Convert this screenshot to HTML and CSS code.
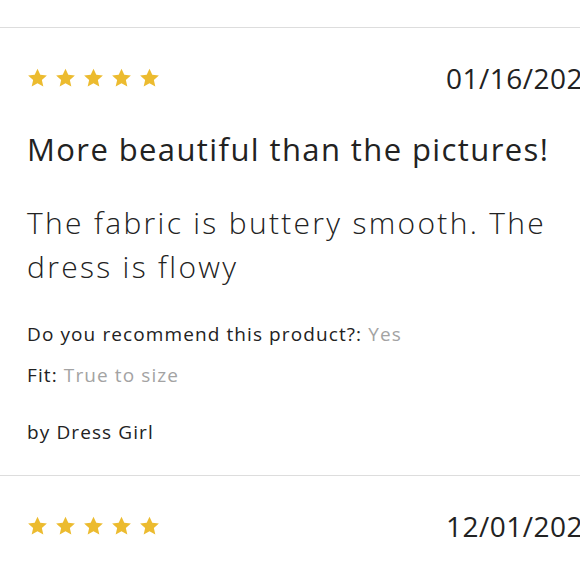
FILE: index.html
```html
<!DOCTYPE html>
<html lang="en">
<head>
<meta charset="utf-8">
<title>Reviews</title>
<link rel="stylesheet" href="styles.css">
</head>
<body>
<div class="page">
  <article class="review">
    <div class="review-head">
      <div class="stars" aria-label="5 stars">
        <svg class="star" viewBox="0 0 24 23"><path d="M12 0.8l3.2 7.1 7.6.7-5.8 5.1 1.7 7.6L12 17.4l-6.7 3.9 1.7-7.6-5.8-5.1 7.6-.7z"/></svg>
        <svg class="star" viewBox="0 0 24 23"><path d="M12 0.8l3.2 7.1 7.6.7-5.8 5.1 1.7 7.6L12 17.4l-6.7 3.9 1.7-7.6-5.8-5.1 7.6-.7z"/></svg>
        <svg class="star" viewBox="0 0 24 23"><path d="M12 0.8l3.2 7.1 7.6.7-5.8 5.1 1.7 7.6L12 17.4l-6.7 3.9 1.7-7.6-5.8-5.1 7.6-.7z"/></svg>
        <svg class="star" viewBox="0 0 24 23"><path d="M12 0.8l3.2 7.1 7.6.7-5.8 5.1 1.7 7.6L12 17.4l-6.7 3.9 1.7-7.6-5.8-5.1 7.6-.7z"/></svg>
        <svg class="star" viewBox="0 0 24 23"><path d="M12 0.8l3.2 7.1 7.6.7-5.8 5.1 1.7 7.6L12 17.4l-6.7 3.9 1.7-7.6-5.8-5.1 7.6-.7z"/></svg>
      </div>
      <span class="date">01/16/2023</span>
    </div>
    <h2 class="title">More beautiful than the pictures!</h2>
    <p class="body-text">The fabric is buttery smooth. The dress is flowy</p>
    <p class="meta meta-first">Do you recommend this product?: <span class="muted">Yes</span></p>
    <p class="meta">Fit: <span class="muted">True to size</span></p>
    <p class="meta author">by Dress Girl</p>
  </article>
  <article class="review">
    <div class="review-head">
      <div class="stars" aria-label="5 stars">
        <svg class="star" viewBox="0 0 24 23"><path d="M12 0.8l3.2 7.1 7.6.7-5.8 5.1 1.7 7.6L12 17.4l-6.7 3.9 1.7-7.6-5.8-5.1 7.6-.7z"/></svg>
        <svg class="star" viewBox="0 0 24 23"><path d="M12 0.8l3.2 7.1 7.6.7-5.8 5.1 1.7 7.6L12 17.4l-6.7 3.9 1.7-7.6-5.8-5.1 7.6-.7z"/></svg>
        <svg class="star" viewBox="0 0 24 23"><path d="M12 0.8l3.2 7.1 7.6.7-5.8 5.1 1.7 7.6L12 17.4l-6.7 3.9 1.7-7.6-5.8-5.1 7.6-.7z"/></svg>
        <svg class="star" viewBox="0 0 24 23"><path d="M12 0.8l3.2 7.1 7.6.7-5.8 5.1 1.7 7.6L12 17.4l-6.7 3.9 1.7-7.6-5.8-5.1 7.6-.7z"/></svg>
        <svg class="star" viewBox="0 0 24 23"><path d="M12 0.8l3.2 7.1 7.6.7-5.8 5.1 1.7 7.6L12 17.4l-6.7 3.9 1.7-7.6-5.8-5.1 7.6-.7z"/></svg>
      </div>
      <span class="date">12/01/2022</span>
    </div>
  </article>
</div>
</body>
</html>
```
FILE: styles.css
```css
html, body {
  margin: 0;
  padding: 0;
  background: #ffffff;
  overflow: hidden;
}

body {
  font-family: "Open Sans", "Lato", sans-serif;
  color: #222222;
}

.page {
  width: 580px;
  padding-top: 27px;
}

.review {
  border-top: 1px solid #dddddd;
  padding: 30px 0 30px 27px;
}

.review-head {
  display: flex;
  align-items: center;
  gap: 286px;
  height: 40px;
}

.stars {
  display: flex;
  gap: 7px;
  flex: none;
}

.star {
  width: 21px;
  height: 20px;
  fill: #ecbb2f;
  display: block;
}

.date {
  flex: none;
  font-size: 28px;
  line-height: 40px;
  font-weight: 400;
  letter-spacing: 0.5px;
  color: #222222;
  white-space: nowrap;
}

.title {
  margin: 31px 0 0 0;
  font-size: 31px;
  line-height: 40px;
  font-weight: 500;
  letter-spacing: 1.4px;
  color: #222222;
  white-space: nowrap;
}

.body-text {
  margin: 32px 0 0 0;
  max-width: 545px;
  font-size: 30px;
  line-height: 44px;
  font-weight: 300;
  letter-spacing: 2.3px;
  color: #222222;
}

.meta {
  margin: 15px 0 0 0;
  font-size: 19px;
  line-height: 26px;
  letter-spacing: 1.1px;
  color: #222222;
}

.meta-first {
  margin-top: 32px;
}

.author {
  margin-top: 31px;
}

.muted {
  color: #a3a3a3;
}
```
